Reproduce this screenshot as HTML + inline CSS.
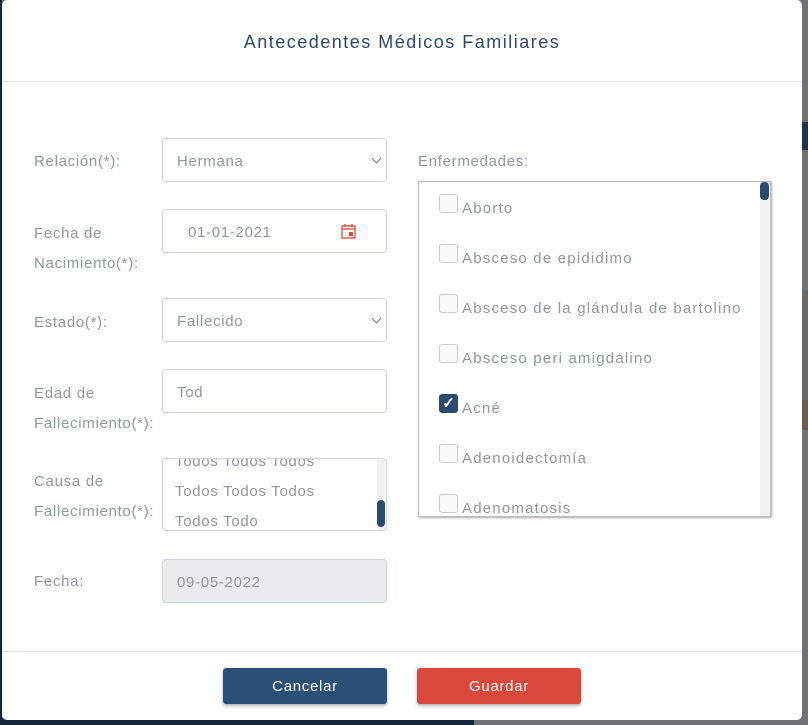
<!DOCTYPE html>
<html><head><meta charset="utf-8"><style>
*{box-sizing:border-box;margin:0;padding:0}
body{width:808px;height:725px;overflow:hidden;position:relative;background:#6f7275;font-family:"Liberation Sans",sans-serif;color:#8e989e;font-size:15px;letter-spacing:0.7px}
.a{position:absolute}
.modal{left:2px;top:0;width:800px;height:720px;background:#fff;border-radius:5px;position:absolute}
.lbl{position:absolute;left:32px;line-height:30px;font-size:15px}
.in{position:absolute;left:160px;width:225px;height:44px;border:1px solid #ced4da;border-radius:4px;padding-left:14px;line-height:46px;font-size:15px;color:#8e989e}
.chev{position:absolute;right:6px;top:16px;width:7px;height:7px;border-right:1.5px solid #777;border-bottom:1.5px solid #777;transform:rotate(45deg)}
.cb{position:absolute;left:20px;width:19px;height:19px;border:1px solid #ccc;border-radius:3px;background:#fafafa}
.it{position:absolute;left:43px;font-size:15px;color:#8e989e;letter-spacing:1.2px}
</style></head><body>
<div class="a" style="left:802px;top:122px;width:6px;height:28px;background:#1d3550"></div>
<div class="a" style="left:802px;top:290px;width:6px;height:110px;background:#6a6a6a"></div>
<div class="a" style="left:802px;top:400px;width:6px;height:30px;background:#6e5b4c"></div>
<div class="a" style="left:0;top:718px;width:474px;height:7px;background:#16263a"></div>
<div class="a" style="left:0;top:0;width:2px;height:725px;background:#16263a"></div>
<div class="modal">
 <div class="a" style="left:0;top:32px;width:800px;text-align:center;font-size:18px;color:#2b4a6b;letter-spacing:1.5px">Antecedentes Médicos Familiares</div>
 <div class="a" style="left:0;top:81px;width:800px;height:1px;background:#e3e6e8"></div>

 <div class="lbl" style="top:147px">Relación(*):</div>
 <div class="in" style="top:138px">Hermana<div class="chev"></div></div>

 <div class="lbl" style="top:219px">Fecha de<br>Nacimiento(*):</div>
 <div class="in" style="top:209px;padding-left:25px">01-01-2021
  <svg class="a" style="left:178px;top:13px" width="15" height="16" viewBox="0 0 15 16"><rect x="1" y="3" width="13" height="12" fill="none" stroke="#e0463b" stroke-width="1.3"/><line x1="1" y1="6" x2="14" y2="6" stroke="#e0463b" stroke-width="1.3"/><line x1="4" y1="1" x2="4" y2="4" stroke="#e0463b" stroke-width="1.3"/><line x1="11" y1="1" x2="11" y2="4" stroke="#e0463b" stroke-width="1.3"/><rect x="8" y="9" width="4" height="4" fill="#e0463b"/></svg>
 </div>

 <div class="lbl" style="top:308px">Estado(*):</div>
 <div class="in" style="top:298px">Fallecido<div class="chev"></div></div>

 <div class="lbl" style="top:379px">Edad de<br>Fallecimiento(*):</div>
 <div class="in" style="top:369px">Tod</div>

 <div class="lbl" style="top:467px">Causa de<br>Fallecimiento(*):</div>
 <div class="in" style="top:458px;height:73px;overflow:hidden;line-height:30px;padding-left:12px">
  <div style="margin-top:-12px">Todos Todos Todos<br>Todos Todos Todos<br>Todos Todo</div>
  <div class="a" style="right:1px;top:1px;width:8px;height:70px;background:#f0f0f0"></div>
  <div class="a" style="right:1px;top:41px;width:8px;height:27px;background:#2b4a6e;border-radius:4px"></div>
 </div>

 <div class="lbl" style="top:147px;left:416px">Enfermedades:</div>
 <div class="a" style="left:416px;top:181px;width:353px;height:336px;border:1px solid #bbb;box-shadow:1px 1px 2px #aaa;overflow:hidden">
  <div class="a" style="right:1px;top:0;width:9px;height:336px;background:#f0f0f0"></div>
  <div class="a" style="right:1px;top:0;width:9px;height:18px;background:#2b4a6e;border-radius:4px"></div>
  <div class="cb" style="top:12px"></div><div class="it" style="top:18px">Aborto</div>
  <div class="cb" style="top:62px"></div><div class="it" style="top:68px">Absceso de epididimo</div>
  <div class="cb" style="top:112px"></div><div class="it" style="top:118px">Absceso de la glándula de bartolino</div>
  <div class="cb" style="top:162px"></div><div class="it" style="top:168px">Absceso peri amigdalino</div>
  <div class="cb" style="top:212px;background:#2b4a6e;border-color:#2b4a6e;color:#fff;font-size:15px;line-height:17px;text-align:center;font-weight:bold;letter-spacing:0">✓</div><div class="it" style="top:218px">Acné</div>
  <div class="cb" style="top:262px"></div><div class="it" style="top:268px">Adenoidectomía</div>
  <div class="cb" style="top:312px"></div><div class="it" style="top:318px">Adenomatosis</div>
 </div>

 <div class="lbl" style="top:567px">Fecha:</div>
 <div class="in" style="top:559px;background:#e9ecef">09-05-2022</div>

 <div class="a" style="left:0;top:651px;width:800px;height:1px;background:#e3e6e8"></div>
 <div class="a" style="left:221px;top:668px;width:164px;height:36px;background:#2c4f78;border-radius:3px;color:#fff;text-align:center;line-height:38px;font-size:15px;box-shadow:0 2px 3px rgba(0,0,0,.3)">Cancelar</div>
 <div class="a" style="left:415px;top:668px;width:164px;height:36px;background:#d9483a;border-radius:3px;color:#fff;text-align:center;line-height:38px;font-size:15px;box-shadow:0 2px 3px rgba(0,0,0,.3)">Guardar</div>
</div>
</body></html>
